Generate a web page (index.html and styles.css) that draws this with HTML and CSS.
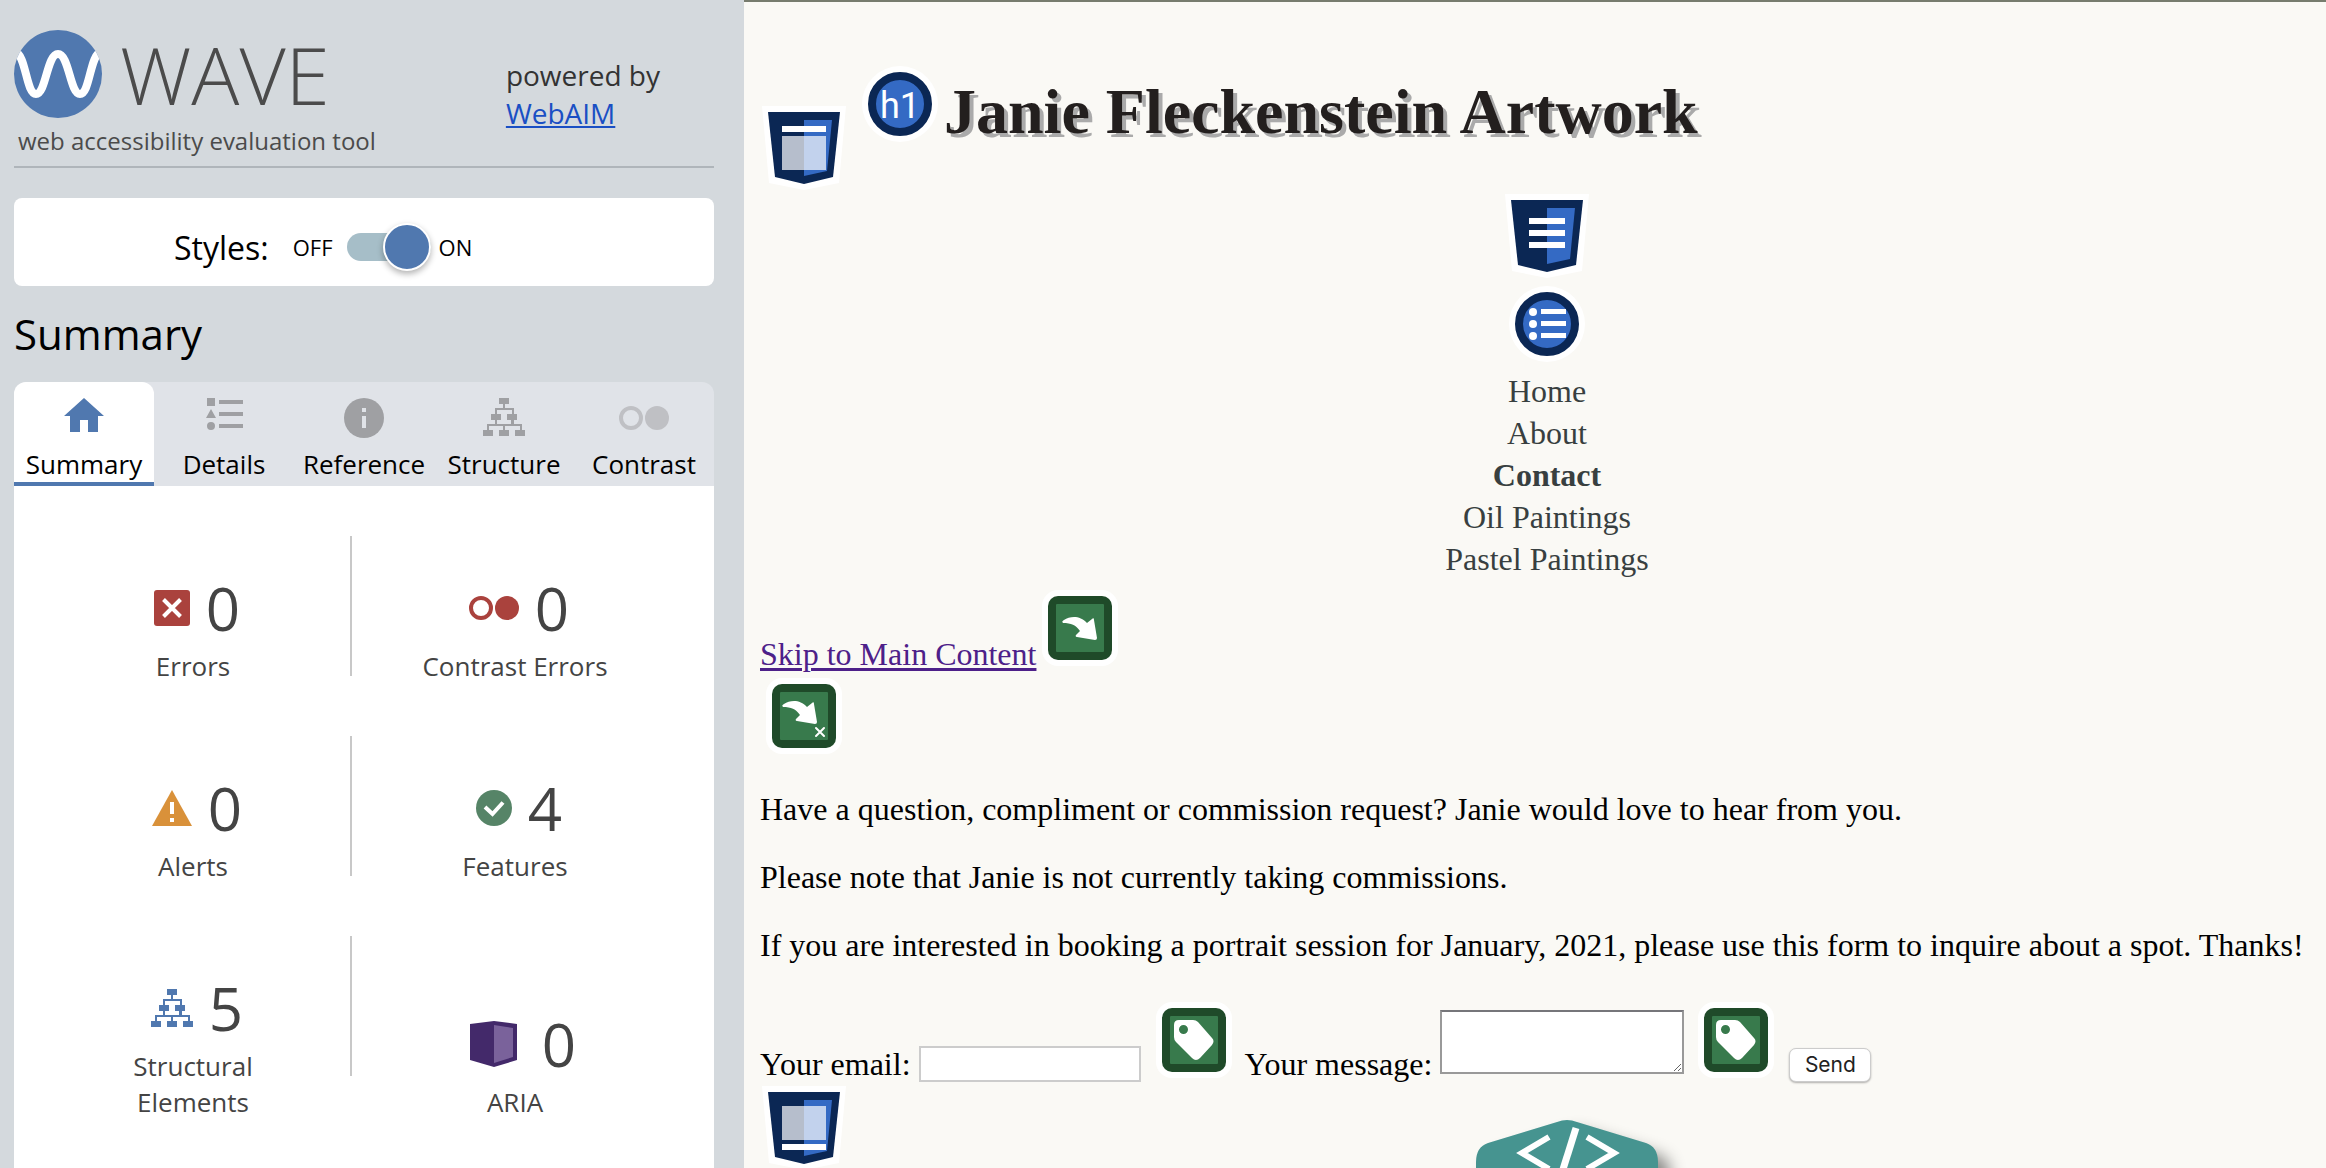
FILE: index.html
```html
<!DOCTYPE html>
<html lang="en">
<head>
<meta charset="utf-8">
<title>Janie Fleckenstein Artwork</title>
<link rel="stylesheet" href="styles.css">
</head>
<body>
<svg class="defs" aria-hidden="true">
  <defs>
    <symbol id="shield" viewBox="0 0 84 84">
      <path d="M0 0H84L77 77L42 84L7 77Z" fill="#fff"/>
      <path d="M6 6H78L71 71L42 78L13 71Z" fill="#0b2754"/>
      <path d="M42 14H70L65 65L42 70Z" fill="#346ac4"/>
    </symbol>
    <symbol id="disc" viewBox="0 0 76 76">
      <circle cx="38" cy="38" r="38" fill="#fff"/>
      <circle cx="38" cy="38" r="28" fill="#346ac4" stroke="#0b2754" stroke-width="8"/>
    </symbol>
    <symbol id="tile" viewBox="0 0 76 76">
      <rect width="76" height="76" rx="16" fill="#fff"/>
      <rect x="6" y="6" width="64" height="64" rx="10" fill="#1f4a29"/>
      <rect x="14" y="14" width="48" height="48" rx="1" fill="#387a4c"/>
    </symbol>
    <symbol id="skip-arrow" viewBox="0 0 36 24">
      <path d="M1 7C0 6 0 5 2 4C8 0 18-1 25 7L30 3C31 2 32 2 32 4L35 22Q35 24 33 24L15 21Q13 21 14 19L18 15C14 9 9 7 1 7Z" fill="#fff"/>
    </symbol>
    <symbol id="tag" viewBox="0 0 40 40">
      <path fill-rule="evenodd" d="M5 0H19Q22 0 24 2L38 18Q41 21 38 25L26 38Q22 42 18 38L2 22Q0 20 0 17V5Q0 0 5 0ZM9.500 5A4.500 4.500 0 1 0 9.500 14A4.500 4.500 0 1 0 9.500 5Z" fill="#fff"/>
    </symbol>
    <symbol id="tree" viewBox="0 0 42 38">
      <path d="M16 0h10v6h-4v4h9v6h3v6h-3v4h8v6h3v6H32v-6h5v-4H22v4h4v6H16v-6h4v-4H6v4h4v6H0v-6h4v-6h8v-4H8v-6h4v-6h8V6h-4zM14 12v4h4v6h-4v4h14v-4h-4v-6h5v-4z" fill="currentColor" fill-rule="evenodd"/>
    </symbol>
    <symbol id="rings" viewBox="0 0 50 24">
      <circle cx="12" cy="12" r="10" fill="none" stroke="currentColor" stroke-width="4"/>
      <circle cx="38" cy="12" r="12" fill="currentColor"/>
    </symbol>
  </defs>
</svg>

<div class="layout">
  <aside class="sidebar">
    <header class="brand">
      <div class="brand-main">
        <div class="brand-row">
          <svg class="brand-logo" viewBox="0 0 88 88" aria-hidden="true">
            <clipPath id="round"><circle cx="44" cy="44" r="44"/></clipPath>
            <g clip-path="url(#round)">
              <rect width="88" height="88" fill="#5078af"/>
              <path d="M1 22C12 24 12 64 22 64S33 24 44 24S56 64 66 64S76 24 87 22" fill="none" stroke="#fff" stroke-width="8"/>
            </g>
          </svg>
          <span class="brand-name">WAVE</span>
        </div>
        <p class="brand-tag">web accessibility evaluation tool</p>
      </div>
      <p class="powered">powered by<br><a href="#webaim">WebAIM</a></p>
    </header>

    <div class="styles-box">
      <span class="styles-label" id="styles-label">Styles:</span>
      <span class="state">OFF</span>
      <input class="toggle" type="checkbox" role="switch" aria-labelledby="styles-label" checked>
      <span class="state">ON</span>
    </div>

    <h2 class="side-title">Summary</h2>

    <nav class="tabs">
      <button class="tab active" type="button">
        <svg class="tab-icon" viewBox="0 0 40 40"><path d="M20 0L40 18H34V34H24V22H16V34H6V18H0Z" fill="currentColor"/></svg>
        Summary
      </button>
      <button class="tab" type="button">
        <svg class="tab-icon" viewBox="0 0 40 40"><path d="M3 0h8v8H3zM15 2h24v4H15zM15 14h24v4H15zM15 26h24v4H15zM7 11l5 9H2zM7 24a4 4 0 1 1 0 8a4 4 0 1 1 0-8z" fill="currentColor"/></svg>
        Details
      </button>
      <button class="tab" type="button">
        <svg class="tab-icon" viewBox="0 0 40 40"><circle cx="20" cy="20" r="20" fill="currentColor"/><path d="M18 10h4v4h-4zM18 18h4v12h-4z" fill="#e0e3e8"/></svg>
        Reference
      </button>
      <button class="tab" type="button">
        <svg class="tab-icon tree"><use href="#tree"/></svg>
        Structure
      </button>
      <button class="tab" type="button">
        <svg class="tab-icon rings"><use href="#rings"/></svg>
        Contrast
      </button>
    </nav>

    <section class="panel">
      <div class="stat">
        <div class="figure">
          <svg class="icon-36" viewBox="0 0 36 36"><rect width="36" height="36" rx="3" fill="#aa423d"/><path d="M9.500 9.500L26.500 26.500M26.500 9.500L9.500 26.500" stroke="#fff" stroke-width="4"/></svg>
          <span class="num">0</span>
        </div>
        <span class="label">Errors</span>
      </div>
      <div class="stat">
        <div class="figure">
          <svg class="rings red"><use href="#rings"/></svg>
          <span class="num">0</span>
        </div>
        <span class="label">Contrast Errors</span>
      </div>
      <div class="stat">
        <div class="figure">
          <svg class="icon-40" viewBox="0 0 40 36"><path d="M20 0L40 36H0Z" fill="#d9913a"/><path d="M18 12h4v12h-4zM18 28h4v4h-4z" fill="#fff"/></svg>
          <span class="num">0</span>
        </div>
        <span class="label">Alerts</span>
      </div>
      <div class="stat">
        <div class="figure">
          <svg class="icon-36" viewBox="0 0 36 36"><circle cx="18" cy="18" r="18" fill="#568467"/><path d="M9 17l7.500 7L27 12.500" fill="none" stroke="#fff" stroke-width="4"/></svg>
          <span class="num">4</span>
        </div>
        <span class="label">Features</span>
      </div>
      <div class="stat">
        <div class="figure">
          <svg class="tree blue"><use href="#tree"/></svg>
          <span class="num">5</span>
        </div>
        <span class="label">Structural<br>Elements</span>
      </div>
      <div class="stat">
        <div class="figure">
          <svg class="aria" viewBox="0 0 48 46"><path d="M0 3L24 0L47 3V39L24 46L0 39Z" fill="#43296a"/><path d="M24 4L43 7V36L24 42Z" fill="#7a629b"/></svg>
          <span class="num">0</span>
        </div>
        <span class="label">ARIA</span>
      </div>
    </section>
  </aside>

  <div class="page">
    <header class="masthead">
      <svg class="mark shield" viewBox="0 0 84 84"><use href="#shield"/><path d="M20 20h44v6H20z" fill="#fff"/><path d="M20 30h44v34H20z" fill="#fff" opacity=".7"/></svg>
      <svg class="mark disc" viewBox="0 0 76 76"><use href="#disc"/><text class="disc-text" x="38" y="52" text-anchor="middle">h1</text></svg>
      <h1 class="site-title">Janie Fleckenstein Artwork</h1>
    </header>

    <nav class="menu">
      <svg class="mark shield" viewBox="0 0 84 84"><use href="#shield"/><path d="M24 24h36v6H24zM24 36h36v6H24zM24 48h36v6H24z" fill="#fff"/></svg>
      <svg class="mark disc" viewBox="0 0 76 76"><use href="#disc"/><g fill="#fff"><circle cx="24" cy="26" r="4"/><circle cx="24" cy="38" r="4"/><circle cx="24" cy="50" r="4"/><path d="M32 23h25v5H32zM32 35h25v5H32zM32 47h25v5H32z"/></g></svg>
      <ul class="menu-list">
        <li><a href="#home">Home</a></li>
        <li><a href="#about">About</a></li>
        <li><a class="current" href="#contact">Contact</a></li>
        <li><a href="#oil">Oil Paintings</a></li>
        <li><a href="#pastel">Pastel Paintings</a></li>
      </ul>
    </nav>

    <div class="skip">
      <a class="skip-link" href="#main">Skip to Main Content</a>
      <svg class="mark tile" viewBox="0 0 76 76"><use href="#tile"/><use href="#skip-arrow" x="20" y="26" width="36" height="24"/></svg>
    </div>

    <main id="main">
      <svg class="mark tile target" viewBox="0 0 76 76"><use href="#tile"/><use href="#skip-arrow" x="16" y="22" width="36" height="24"/><path d="M50 50l8 8M58 50l-8 8" stroke="#fff" stroke-width="2" stroke-linecap="round"/></svg>
      <p>Have a question, compliment or commission request? Janie would love to hear from you.</p>
      <p>Please note that Janie is not currently taking commissions.</p>
      <p>If you are interested in booking a portrait session for January, 2021, please use this form to inquire about a spot. Thanks!</p>
      <form class="contact">
        <label for="email">Your email:</label>
        <input class="email" id="email" type="email">
        <svg class="mark tile" viewBox="0 0 76 76"><use href="#tile"/><use href="#tag" x="18" y="18" width="40" height="40"/></svg>
        <label for="message">Your message:</label>
        <textarea class="message" id="message"></textarea>
        <svg class="mark tile" viewBox="0 0 76 76"><use href="#tile"/><use href="#tag" x="18" y="18" width="40" height="40"/></svg>
        <button class="send" type="button">Send</button>
      </form>
    </main>

    <footer class="footer">
      <svg class="mark shield" viewBox="0 0 84 84"><use href="#shield"/><path d="M20 20h44v34H20z" fill="#fff" opacity=".7"/><path d="M20 58h44v6H20z" fill="#fff"/></svg>
      <svg class="badge" viewBox="0 0 182 200">
        <path d="M81 2Q91-2 101 2L170 23Q182 27 182 42V158Q182 173 170 177L101 198Q91 202 81 198L12 177Q0 173 0 158V42Q0 27 12 23Z" fill="#469490"/>
        <path d="M73 17L46 33L73 49M111 17L138 33L111 49" fill="none" stroke="#fff" stroke-width="6"/>
        <path d="M100 8L83 62" stroke="#fff" stroke-width="7"/>
      </svg>
    </footer>
  </div>
</div>
</body>
</html>
```
FILE: styles.css
```css
* {
  box-sizing: border-box;
}

body {
  margin: 0;
  height: 100vh;
  overflow: hidden;
  background: #faf9f5;
}

p,
h1,
h2,
ul {
  margin: 0;
}

button,
input,
textarea {
  margin: 0;
}

svg {
  display: block;
  flex: none;
}

.defs {
  position: absolute;
  width: 0;
  height: 0;
}

.layout {
  display: flex;
  height: 100vh;
}

/* Sidebar */

.sidebar {
  flex: 0 0 744px;
  display: flex;
  flex-direction: column;
  padding: 0 30px 0 14px;
  background: #d4d9dd;
  font-family: "Open Sans", "Noto Sans", sans-serif;
}

.brand {
  display: flex;
  justify-content: space-between;
  height: 168px;
  padding: 30px 54px 0 0;
  border-bottom: 2px solid #afb5ba;
}

.brand-row {
  display: flex;
  align-items: center;
  gap: 18px;
}

.brand-logo {
  width: 88px;
  height: 88px;
}

.brand-name {
  color: #4b4b4b;
  font-size: 80px;
  font-weight: 300;
  line-height: 88px;
}

.brand-tag {
  padding: 7px 0 0 4px;
  color: #4b4b4b;
  font-size: 24px;
  line-height: 32px;
}

.powered {
  padding-top: 26px;
  color: #333;
  font-size: 28px;
  line-height: 38px;
}

.powered a {
  color: #1a4fc4;
}

.styles-box {
  display: flex;
  align-items: center;
  height: 88px;
  margin-top: 30px;
  padding: 10px 0 0 160px;
  border-radius: 8px;
  background: #fff;
  color: #000;
}

.styles-label {
  margin-right: 24px;
  font-size: 32px;
}

.state {
  font-size: 22px;
}

.toggle {
  appearance: none;
  display: flex;
  align-items: center;
  justify-content: flex-end;
  width: 84px;
  height: 28px;
  margin: 0 8px 0 14px;
  border-radius: 14px;
  background: #a6bec8;
}

.toggle::before {
  content: "";
  flex: none;
  width: 44px;
  height: 44px;
  border: 2px solid #fff;
  border-radius: 50%;
  background: #5078af;
  box-shadow: 0 3px 6px rgba(0, 0, 0, 0.3);
}

.side-title {
  padding: 20px 0;
  font-size: 42px;
  font-weight: 400;
  line-height: 56px;
}

.tabs {
  display: grid;
  grid-template-columns: repeat(5, 1fr);
  height: 104px;
  border-radius: 12px 12px 0 0;
  background: #e0e3e8;
}

.tab {
  display: flex;
  flex-direction: column;
  align-items: center;
  justify-content: space-between;
  padding: 16px 0 0;
  border: 0;
  border-bottom: 4px solid transparent;
  border-radius: 12px 12px 0 0;
  background: transparent;
  color: #000;
  font: 26px/36px "Open Sans", "Noto Sans", sans-serif;
}

.tab.active {
  border-radius: 12px 12px 0 0;
  border-bottom-color: #5078af;
  background: #fff;
}

.tab-icon {
  width: 40px;
  height: 40px;
  color: #9fa0a3;
}

.active .tab-icon {
  color: #5078af;
}

.tree {
  width: 42px;
  height: 38px;
}

.rings {
  width: 50px;
  height: 24px;
}

.tab-icon.rings {
  margin-top: 8px;
  color: #bfc0c4;
}

.panel {
  flex: 1;
  display: grid;
  grid-template-columns: 338px 306px;
  align-content: start;
  row-gap: 52px;
  padding-top: 50px;
  background: #fff;
}

.stat {
  display: flex;
  flex-direction: column;
  align-items: center;
  justify-content: flex-end;
  gap: 6px;
  padding: 38px 0 0 20px;
  color: #444;
}

.stat:nth-child(odd) {
  background: linear-gradient(#c8c8c8, #c8c8c8) right top / 2px 140px no-repeat;
}

.figure {
  display: flex;
  align-items: center;
  gap: 16px;
  padding-left: 8px;
}

.num {
  font-size: 60px;
  line-height: 68px;
}

.label {
  font-size: 26px;
  line-height: 36px;
  text-align: center;
}

.icon-36 {
  width: 36px;
  height: 36px;
}

.icon-40 {
  width: 40px;
  height: 36px;
}

.red {
  color: #aa423d;
}

.blue {
  color: #5078af;
}

.aria {
  width: 48px;
  height: 46px;
  margin: 0 8px;
}

/* Evaluated page */

.page {
  flex: 1;
  min-width: 0;
  padding: 0 16px;
  overflow: hidden;
  border-top: 2px solid #777c6e;
  background: #faf9f5;
  color: #000;
  font-family: "Liberation Serif", "Times New Roman", serif;
  font-size: 32px;
  line-height: 36px;
}

.shield {
  width: 84px;
  height: 84px;
}

.disc,
.tile {
  width: 76px;
  height: 76px;
}

.masthead {
  display: flex;
  align-items: flex-start;
  padding-top: 64px;
}

.masthead .shield {
  margin: 40px 16px 0 2px;
}

.disc-text {
  fill: #fff;
  font-family: Roboto, sans-serif;
  font-size: 36px;
}

.site-title {
  padding: 10px 0 0 6px;
  color: #231f1e;
  font-size: 64px;
  line-height: 72px;
  text-shadow: 4px 4px #aaa;
}

.menu {
  display: flex;
  flex-direction: column;
  align-items: center;
  padding: 4px 0 0 24px;
}

.menu .disc {
  margin: 8px 0;
}

.menu-list {
  padding: 0;
  list-style: none;
  text-align: center;
}

.menu-list li {
  line-height: 42px;
}

.menu-list a {
  color: #383f40;
  text-decoration: none;
}

.menu-list .current {
  font-weight: 700;
}

.skip {
  display: flex;
  align-items: flex-end;
  gap: 6px;
  padding-top: 10px;
}

.skip-link {
  color: #4d2089;
  text-underline-offset: 3px;
}

.skip .tile {
  margin-bottom: 6px;
}

.target {
  margin: 6px 0 37px 6px;
}

main p {
  margin-bottom: 32px;
}

.contact {
  display: flex;
  align-items: flex-end;
  padding-top: 7px;
}

.contact label {
  white-space: nowrap;
}

.email {
  width: 222px;
  height: 36px;
  margin: 0 15px 0 8px;
  border: 2px solid #ccc;
  background: #fff;
}

.message {
  width: 244px;
  height: 64px;
  margin: 0 14px 8px 8px;
  border: 2px solid #999;
  border-top-color: #76767a;
  background: #fff;
}

.contact .tile {
  margin-bottom: 4px;
}

.tile + label {
  margin-left: 13px;
}

.send {
  width: 82px;
  height: 34px;
  margin-left: 15px;
  padding: 0;
  border: 1px solid #ccc;
  border-radius: 7px;
  background: #fff;
  box-shadow: 0 1px 2px rgba(0, 0, 0, 0.3);
  color: #222;
  font: 21px/32px Inter, sans-serif;
}

.footer {
  display: flex;
  align-items: flex-start;
  justify-content: space-between;
  padding: 4px 652px 0 2px;
}

.badge {
  width: 182px;
  height: 200px;
  margin-top: 34px;
  overflow: visible;
  filter: drop-shadow(12px 12px 8px rgba(0, 0, 0, 0.45));
}
```
